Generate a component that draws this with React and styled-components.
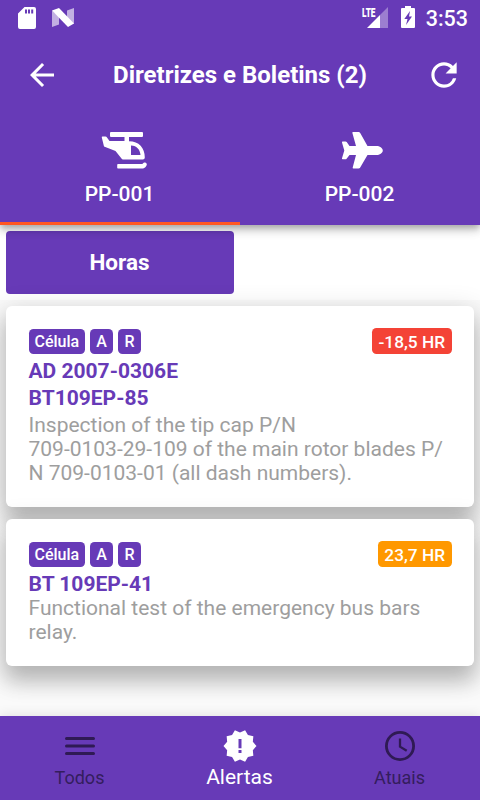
import React, { useState } from "react";
import styled, { createGlobalStyle } from "styled-components";

const GlobalStyle = createGlobalStyle`
	* {
		box-sizing: border-box;
	}
	body {
		margin: 0;
		font-family: Roboto, sans-serif;
		background: #fafafa;
	}
	button {
		font-family: inherit;
		border: none;
		background: none;
		padding: 0;
		color: inherit;
	}
	svg {
		display: block;
		flex: none;
	}
`;

const Root = styled.div`
	width: 480px;
	height: 800px;
	display: flex;
	flex-direction: column;
	overflow: hidden;
	background: #fafafa;
`;

const Header = styled.header`
	flex: none;
	height: 225px;
	background: #673ab7;
	color: #fff;
	z-index: 1;
	box-shadow: 0 3px 6px -1px rgba(0, 0, 0, 0.2), 0 6px 8px rgba(0, 0, 0, 0.14),
		0 1px 15px rgba(0, 0, 0, 0.12);
`;

const StatusBar = styled.div`
	height: 36px;
	display: flex;
	justify-content: space-between;
	padding: 0 12px 0 18px;
`;

const StatusGroup = styled.div`
	display: flex;
	align-items: center;
`;

const Clock = styled.span`
	font-size: 21.5px;
	font-weight: 500;
	line-height: 36px;
	padding-top: 2px;
	margin-left: 11px;
`;

const Toolbar = styled.div`
	height: 78px;
	display: flex;
	align-items: center;
	justify-content: space-between;
	padding: 0 18px 0 24px;
`;

const IconButton = styled.button`
	width: 36px;
	height: 36px;
	display: flex;
	align-items: center;
	justify-content: center;
`;

const Title = styled.h1`
	margin: 0 6px 0 0;
	font-size: 24px;
	font-weight: 700;
	line-height: 30px;
	white-space: nowrap;
`;

const Tabs = styled.div`
	display: flex;
	height: 111px;
`;

const Tab = styled.button`
	flex: 1;
	display: flex;
	flex-direction: column;
	align-items: center;
	padding: 12px 1px 0 0;
	border-bottom: 3px solid ${(props) => (props.$active ? "#ff5722" : "transparent")};
	font-size: 21px;
	font-weight: 500;
	line-height: 25px;
`;

const TabIcon = styled.svg`
	width: 48px;
	height: 48px;
	margin-bottom: 8px;
	margin-left: 9px;
`;

const Filters = styled.div`
	flex: none;
	height: 75px;
	padding: 6px;
	background: #fff;
`;

const FilterButton = styled.button`
	width: 228px;
	height: 63px;
	padding: 0 1px 2px 0;
	border-radius: 4px;
	background: #673ab7;
	color: #fff;
	font-size: 22.5px;
	font-weight: 700;
`;

const List = styled.main`
	flex: 1;
	display: flex;
	flex-direction: column;
	gap: 12px;
	padding: 6px;
`;

const CardRoot = styled.article`
	height: ${(props) => props.$height}px;
	padding: 22px 22.5px 0;
	border-radius: 6px;
	background: #fff;
	box-shadow: 0 15px 21px 1px rgba(0, 0, 0, 0.2), 0 6px 27px 4px rgba(0, 0, 0, 0.12);
`;

const CardHead = styled.div`
	height: 30px;
	display: flex;
	align-items: flex-start;
	justify-content: space-between;
`;

const Tags = styled.div`
	display: flex;
	gap: 4.5px;
	padding-top: 1px;
`;

const Tag = styled.span`
	height: 24.5px;
	min-width: 23.5px;
	padding: 0 6px;
	border-radius: 4.5px;
	background: #673ab7;
	color: #fff;
	font-size: 16px;
	font-weight: 500;
	line-height: 25px;
	text-align: center;
`;

const Due = styled.span`
	height: 26px;
	padding: 0 6.5px;
	border-radius: 4.5px;
	background: ${(props) => props.$color};
	color: #fff;
	font-size: 17.25px;
	font-weight: 500;
	line-height: 28px;
`;

const Code = styled.div`
	color: #673ab7;
	font-size: 21px;
	font-weight: 700;
	line-height: 27px;
`;

const Description = styled.p`
	margin: ${(props) => props.$gap}px 0 0;
	color: #9e9e9e;
	font-size: 21px;
	line-height: 24px;
	white-space: pre-line;
`;

const BottomBar = styled.nav`
	flex: none;
	height: 84px;
	display: flex;
	background: #673ab7;
	z-index: 1;
	box-shadow: 0 0 12px rgba(0, 0, 0, 0.12);
`;

const NavItem = styled.button`
	flex: 1;
	display: flex;
	flex-direction: column;
	align-items: center;
	padding-top: 12px;
	color: ${(props) => (props.$active ? "#fff" : "#2f1a54")};
	font-size: ${(props) => (props.$active ? 21 : 18)}px;
	line-height: 26px;

	svg {
		width: 36px;
		height: 36px;
	}
`;

const NavLabel = styled.span`
	margin-top: ${(props) => (props.$active ? 0 : 1)}px;
	padding-right: 1px;
	opacity: ${(props) => (props.$active ? 1 : 0.9)};
`;

const SdCardIcon = () => (
	<svg width="18" height="22" viewBox="0 0 18 22">
		<path
			fill="#fff"
			fillRule="evenodd"
			d="M6.500 0H16a2 2 0 0 1 2 2v18a2 2 0 0 1-2 2H2a2 2 0 0 1-2-2V6.500zM7 2.500v4h2v-4zm3 0v4h2v-4zm3.200 0v4h2v-4z"
		/>
	</svg>
);

const NougatSvg = styled.svg`
	margin-left: 16px;
`;

const NougatIcon = () => (
	<NougatSvg width="22" height="20" viewBox="0 0 22 20">
		<path fill="#fff" opacity="0.6" d="M0 2.600l7 6v7.900L0 19zM15 2.500L22 0v16l-7-5z" />
		<path fill="#fff" d="M0 2.600L7 0l15 15.500-6 3.500z" />
	</NougatSvg>
);

const SignalSvg = styled.svg`
	overflow: visible;
`;

const SignalIcon = () => (
	<SignalSvg width="27" height="22" viewBox="0 0 27 22">
		<text
			x="0"
			y="10"
			fill="#fff"
			fontSize="13"
			fontWeight="900"
			textLength="13.5"
			lengthAdjust="spacingAndGlyphs"
		>
			LTE
		</text>
		<path fill="#fff" opacity="0.35" d="M26 0v21h-8V8z" />
		<path fill="#fff" d="M18 8v13H5z" />
	</SignalSvg>
);

const BatterySvg = styled.svg`
	margin-left: 12px;
	margin-bottom: 2px;
`;

const BatteryIcon = () => (
	<BatterySvg width="14" height="22" viewBox="0 0 14 22">
		<path
			fill="#fff"
			fillRule="evenodd"
			d="M4 0h6v2h3a1 1 0 0 1 1 1v18a1 1 0 0 1-1 1H1a1 1 0 0 1-1-1V3a1 1 0 0 1 1-1h3zM9 5L3.300 13H6.500L5 19l6-8.500H8z"
		/>
	</BatterySvg>
);

const BackIcon = () => (
	<svg width="36" height="36" viewBox="0 0 24 24">
		<path fill="#fff" d="M20 11H7.830l5.590-5.590L12 4l-8 8 8 8 1.410-1.410L7.830 13H20v-2z" />
	</svg>
);

const RefreshIcon = () => (
	<svg width="38" height="38" viewBox="0 0 24 24">
		<path
			fill="#fff"
			d="M17.650 6.350A7.958 7.958 0 0 0 12 4c-4.420 0-7.990 3.580-7.990 8s3.570 8 7.990 8c3.730 0 6.840-2.550 7.730-6h-2.080A5.990 5.990 0 0 1 12 18c-3.310 0-6-2.690-6-6s2.690-6 6-6c1.660 0 3.140.69 4.220 1.780L13 11h7V4l-2.350 2.350z"
		/>
	</svg>
);

const HelicopterIcon = () => (
	<TabIcon viewBox="0 0 48 48">
		<path
			fill="#fff"
			fillRule="evenodd"
			d="M11 6h31a1 1 0 0 1 1 1v3a1 1 0 0 1-1 1H29v4.300C39 15.300 44.800 22 44.800 31.500a2 2 0 0 1-2 2H23.500c-1 0-1.500-.4-2-1L15.500 25 4 20.500 1.800 11.500a.8.800 0 0 1 .8-1H5.500c.7 0 1 .2 1.300.7L9.500 15H24.500V11H11a1 1 0 0 1-1-1V7a1 1 0 0 1 1-1zM31 19.500V29h9.500c-.3-5-3.500-9.500-9.500-9.500z"
		/>
		<path
			fill="#fff"
			d="M18 38h24c1.200 0 1-1.500 2.500-1.500 1 0 2.300.6 2.300 1.700 0 2.200-2.300 4.300-4.800 4.300H18a.8.800 0 0 1-.8-.8v-3a.8.800 0 0 1 .8-.7z"
		/>
	</TabIcon>
);

const PlaneIcon = () => (
	<TabIcon viewBox="0 0 48 48">
		<path
			fill="#fff"
			d="M13 6h5.500a2 2 0 0 1 1.700 1L27.500 20H36.500c3 0 6.300 2 6.300 4.500S39.500 29 36.500 29H27.500L20.200 41.500a2 2 0 0 1-1.700 1H13.500a.8.800 0 0 1-.8-1L16 29H9.500L6.600 32.700a1.600 1.600 0 0 1-1.200.6H2.800a.8.800 0 0 1-.8-1L4.300 24.500 2 16.500a.8.800 0 0 1 .8-1H5.500a1.600 1.600 0 0 1 1.200.6L9.500 20H16L12.400 7A.8.800 0 0 1 13 6z"
		/>
	</TabIcon>
);

const MenuIcon = () => (
	<svg viewBox="0 0 36 36" stroke="currentColor" strokeWidth="3" strokeLinecap="round">
		<path d="M4.500 10.500h27M4.500 18h27M4.500 25.500h27" />
	</svg>
);

const AlertIcon = () => (
	<svg viewBox="0 0 24 24">
		<path
			fill="currentColor"
			d="M23 12l-2.440-2.780.34-3.680-3.610-.82-1.890-3.180L12 3 8.600 1.540 6.710 4.720l-3.610.81.34 3.680L1 12l2.440 2.780-.34 3.690 3.610.82 1.890 3.180L12 21l3.400 1.460 1.890-3.180 3.610-.82-.34-3.680L23 12zm-10 4.700h-2v-2h2v2zm0-3.200h-2V7.300h2v6.200z"
		/>
	</svg>
);

const ClockIcon = () => (
	<svg viewBox="0 0 36 36" fill="none" stroke="currentColor">
		<circle cx="18" cy="18" r="13.600" strokeWidth="2.800" />
		<path d="M18 10.500v8.200l6.700 4" strokeWidth="2.300" />
	</svg>
);

const bulletins = [
	{
		id: 1,
		codes: ["AD 2007-0306E", "BT109EP-85"],
		text: "Inspection of the tip cap P/N\n709-0103-29-109 of the main rotor blades P/\nN 709-0103-01 (all dash numbers).",
		due: "-18,5 HR",
		color: "#f44336",
		height: 201,
		gap: 1,
	},
	{
		id: 2,
		codes: ["BT 109EP-41"],
		text: "Functional test of the emergency bus bars\nrelay.",
		due: "23,7 HR",
		color: "#ff9800",
		height: 147,
		gap: -2,
	},
];

const Card = ({ item }) => (
	<CardRoot $height={item.height}>
		<CardHead>
			<Tags>
				<Tag>Célula</Tag>
				<Tag>A</Tag>
				<Tag>R</Tag>
			</Tags>
			<Due $color={item.color}>{item.due}</Due>
		</CardHead>
		{item.codes.map((code) => (
			<Code key={code}>{code}</Code>
		))}
		<Description $gap={item.gap}>{item.text}</Description>
	</CardRoot>
);

const aircraft = [
	{ name: "PP-001", Icon: HelicopterIcon },
	{ name: "PP-002", Icon: PlaneIcon },
];

const pages = [
	{ name: "Todos", Icon: MenuIcon },
	{ name: "Alertas", Icon: AlertIcon },
	{ name: "Atuais", Icon: ClockIcon },
];

export default function App() {
	const [tab, setTab] = useState("PP-001");
	const [page, setPage] = useState("Alertas");

	return (
		<Root>
			<GlobalStyle />
			<Header>
				<StatusBar>
					<StatusGroup>
						<SdCardIcon />
						<NougatIcon />
					</StatusGroup>
					<StatusGroup>
						<SignalIcon />
						<BatteryIcon />
						<Clock>3:53</Clock>
					</StatusGroup>
				</StatusBar>
				<Toolbar>
					<IconButton aria-label="Voltar">
						<BackIcon />
					</IconButton>
					<Title>Diretrizes e Boletins (2)</Title>
					<IconButton aria-label="Atualizar">
						<RefreshIcon />
					</IconButton>
				</Toolbar>
				<Tabs>
					{aircraft.map(({ name, Icon }) => (
						<Tab key={name} $active={tab === name} onClick={() => setTab(name)}>
							<Icon />
							{name}
						</Tab>
					))}
				</Tabs>
			</Header>
			<Filters>
				<FilterButton>Horas</FilterButton>
			</Filters>
			<List>
				{bulletins.map((item) => (
					<Card key={item.id} item={item} />
				))}
			</List>
			<BottomBar>
				{pages.map(({ name, Icon }) => (
					<NavItem key={name} $active={page === name} onClick={() => setPage(name)}>
						<Icon />
						<NavLabel $active={page === name}>{name}</NavLabel>
					</NavItem>
				))}
			</BottomBar>
		</Root>
	);
}
